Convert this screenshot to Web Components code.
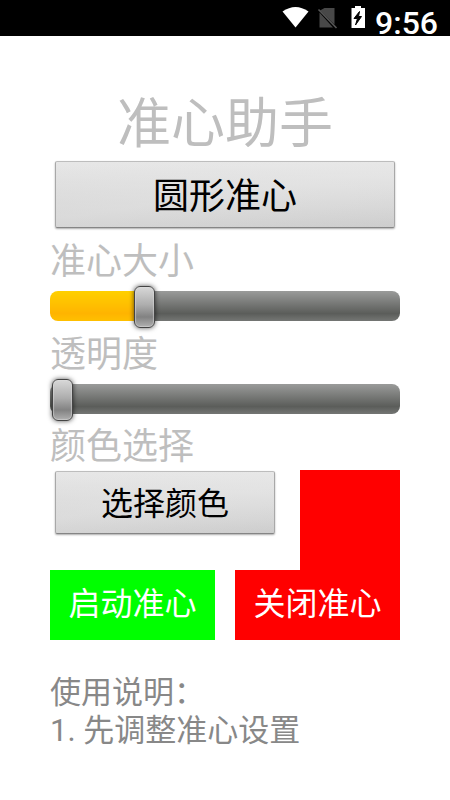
<!DOCTYPE html>
<html lang="zh-CN">
<head>
<meta charset="utf-8">
<meta name="viewport" content="width=device-width, initial-scale=1">
<title>准心助手</title>
<style>
body { margin: 0; background: #fff; font-family: Roboto, "Noto Sans CJK SC", sans-serif; }
</style>
</head>
<body>
<crosshair-app></crosshair-app>
<script>
class BaseElement extends HTMLElement {
  constructor() {
    super();
    this.attachShadow({ mode: "open" }).innerHTML = this.template();
  }
}

customElements.define("status-bar", class extends BaseElement {
  template() {
    return `<style>
      :host { display: flex; justify-content: flex-end; align-items: flex-start; height: 36px; padding-right: 12px; background: #000; color: #fff; }
      svg { display: block; flex: none; }
      time { font-size: 32px; line-height: 26px; padding-top: 10px; margin-left: 8px; font-weight: 500; }
    </style>
    <svg width="87" height="36" viewBox="0 0 87 36" aria-hidden="true">
      <path d="M2.500 11.500Q15.500 2.500 28.500 11.500L15.500 27.500Z" fill="#fff"/>
      <path d="M44.500 8H54.500V24.500L40 10.500Z M39.500 12.500V27.500H53Z" fill="#484848"/>
      <path d="M38.500 9.500L56.500 28" stroke="#555" stroke-width="1.600"/>
      <path d="M71.500 8H75V6H81V8H85V28H71.500Z" fill="#fff"/>
      <path d="M79.500 11.500L74 18.500H77.500L75.500 25L81.500 16.500H78.500Z" fill="#000" stroke="#000"/>
    </svg>
    <time>9:56</time>`;
  }
});

customElements.define("panel-button", class extends BaseElement {
  template() {
    return `<style>
      :host { display: flex; padding: 1px 5px 6px; box-sizing: border-box; font-size: 32px; }
      button { flex: 1; box-sizing: border-box; padding: 0 0 3px; font: inherit; color: #000;
        border: 1px solid; border-color: #bdbdbd #a8a8a8 #858585; border-radius: 2px;
        background: linear-gradient(172deg, #dedede00, #e9e9e960 50%, #dedede00), linear-gradient(#e7e7e7, #cdcdcd);
        box-shadow: 0 1px 2px #0005; }
    </style><button type="button"><slot></slot></button>`;
  }
});

customElements.define("flat-button", class extends BaseElement {
  template() {
    return `<style>
      :host { display: flex; flex: 1; height: 70px; }
      button { flex: 1; border: 0; padding: 0 0 8px; font: inherit; font-size: 32px; color: #fff; background: var(--fill); }
    </style><button type="button"><slot></slot></button>`;
  }
});

customElements.define("labelled-slider", class extends BaseElement {
  template() {
    return `<style>
      :host { display: block; color: #bebebe; }
      label { display: block; padding-top: 6px; font-size: 36px; line-height: 45px; }
      input { display: block; width: 100%; height: 42px; margin: 0; appearance: none; -webkit-appearance: none; background: none; }
      input::-webkit-slider-runnable-track { height: 30px; border-radius: 8px;
        background: linear-gradient(#ffd000, #ffb400 75%, #ffc000) 0 0 / var(--done) 100% no-repeat,
          linear-gradient(#9a9b9a, #5b5d5a 75%, #747674); }
      input::-webkit-slider-thumb { -webkit-appearance: none; box-sizing: border-box; width: 21px; height: 42px; margin-top: -5px;
        border: 1px solid #444; border-radius: 6px;
        background: linear-gradient(#d8d8d8, #adadad 45%, #828282 75%, #b0b0b0);
        box-shadow: inset 0 0 1px 1px #ddd8, 0 0 5px #000a; }
    </style>
    <label for="range"><slot></slot></label>
    <input id="range" type="range" min="-2" max="327" step="1">`;
  }
  connectedCallback() {
    const input = this.shadowRoot.querySelector("input");
    const update = () => input.style.setProperty("--done", Math.max(0, input.value / 3.27) + "%");
    input.value = this.getAttribute("value");
    input.addEventListener("input", update);
    update();
  }
});

customElements.define("crosshair-app", class extends BaseElement {
  template() {
    return `<style>
      :host { display: block; }
      main { padding: 54px 50px 0; }
      h1 { margin: 0; font-size: 54px; line-height: 70px; font-weight: 400; text-align: center; color: #bebebe; }
      .shape { height: 74px; font-size: 36px; }
      h2 { margin: 0; padding-top: 5px; font-size: 36px; line-height: 45px; font-weight: 400; color: #bebebe; }
      .colour { display: flex; gap: 20px; height: 100px; }
      .colour panel-button { flex: 1; height: 70px; }
      .swatch { width: 100px; background: #f00; }
      .actions { display: flex; gap: 20px; }
      .help { margin-top: 34px; font-size: 31px; line-height: 38px; color: #888; }
      p { margin: 0; }
    </style>
    <status-bar></status-bar>
    <main>
      <h1>准心助手</h1>
      <panel-button class="shape">圆形准心</panel-button>
      <labelled-slider value="82">准心大小</labelled-slider>
      <labelled-slider value="0">透明度</labelled-slider>
      <h2>颜色选择</h2>
      <div class="colour">
        <panel-button>选择颜色</panel-button>
        <div class="swatch" role="img" aria-label="红色"></div>
      </div>
      <div class="actions">
        <flat-button style="--fill:#0f0">启动准心</flat-button>
        <flat-button style="--fill:#f00">关闭准心</flat-button>
      </div>
      <section class="help">
        <p>使用说明：</p>
        <p>1. 先调整准心设置</p>
      </section>
    </main>`;
  }
});
</script>
</body>
</html>
